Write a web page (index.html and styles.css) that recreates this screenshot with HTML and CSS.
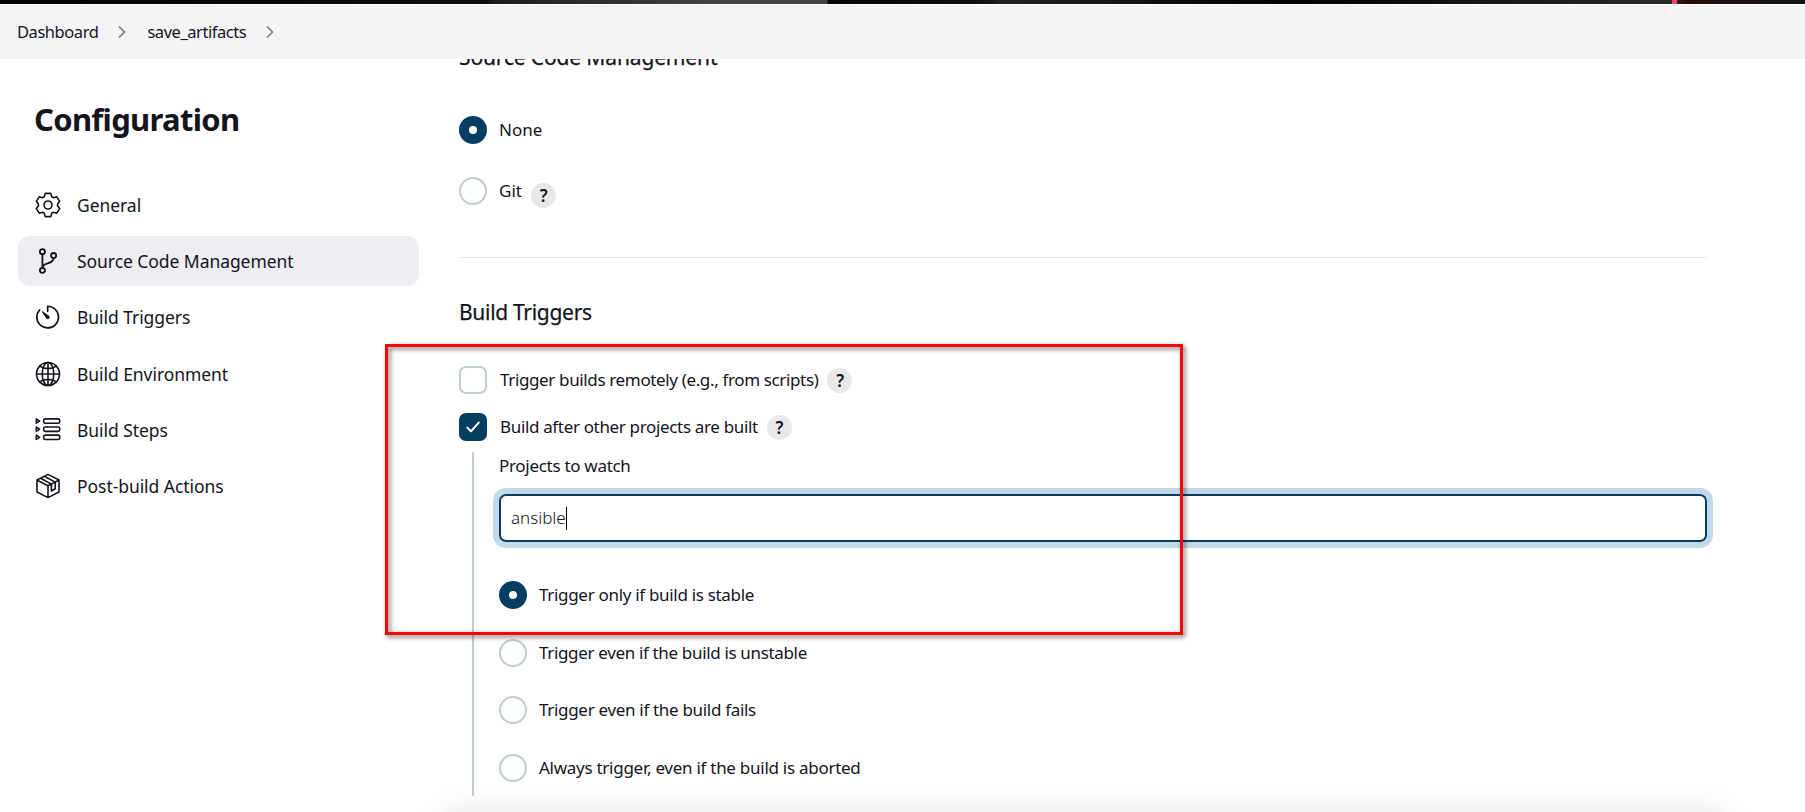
FILE: index.html
```html
<!DOCTYPE html>
<html lang="en">
<head>
<meta charset="utf-8">
<title>save_artifacts Config</title>
<link rel="stylesheet" href="styles.css">
</head>
<body>
<div class="page">
  <div class="topbar"><span class="topbar-mark"></span></div>
  <nav class="breadcrumbs">
    <a class="crumb">Dashboard</a>
    <svg class="chevron" viewBox="0 0 8 14"><path d="M1 1.5 6.5 7 1 12.5"/></svg>
    <a class="crumb">save_artifacts</a>
    <svg class="chevron" viewBox="0 0 8 14"><path d="M1 1.5 6.5 7 1 12.5"/></svg>
  </nav>
  <div class="body">
    <aside class="sidebar">
      <h1 class="title">Configuration</h1>
      <ul class="tasks">
        <li class="task"><svg class="icon" viewBox="0 0 26 26"><circle cx="13" cy="13" r="4"/><path d="M10.2 1.4h5.6l.9 3.3 1.8 1 3.3-.9 2.8 4.6-2 2.6v2l2 2.6-2.8 4.6-3.3-.9-1.8 1-.9 3.3h-5.6l-.9-3.3-1.8-1-3.3.9-2.8-4.6 2-2.6v-2l-2-2.6 2.8-4.6 3.3.9 1.8-1z"/></svg>General</li>
        <li class="task task-active"><svg class="icon icon-bold" viewBox="0 0 512 512"><circle cx="146" cy="72" r="50"/><circle cx="146" cy="440" r="50"/><path d="M146 390V122"/><circle cx="366" cy="148" r="50"/><path d="M366 198c0 142-220 68-220 192"/></svg>Source Code Management</li>
        <li class="task"><svg class="icon" viewBox="32 24 460 460"><path d="M112.91 128A191.85 191.85 0 0064 254c-1.18 106.35 85.65 193.8 192 194 106.2.2 192-85.83 192-192 0-104.54-83.55-189.61-187.5-192a4.36 4.36 0 00-4.5 4.37V152"/><path class="fill" d="M233.38 278.63l-79-113a8.13 8.13 0 0111.32-11.32l113 79a32.5 32.5 0 01-37.25 53.26 33.21 33.21 0 01-8.07-7.94z"/></svg>Build Triggers</li>
        <li class="task"><svg class="icon" viewBox="0 0 26 26"><circle cx="13" cy="13" r="11.5"/><ellipse cx="13" cy="13" rx="5.8" ry="11.5"/><path d="M13 1.5v23M1.5 13h23M4.6 5.2c4.6 3.2 12.2 3.2 16.8 0M4.6 20.8c4.6-3.2 12.2-3.2 16.8 0"/></svg>Build Environment</li>
        <li class="task"><svg class="icon" viewBox="0 0 26 26"><rect x="8.7" y="1.9" width="16" height="4.4" rx="1.6"/><rect x="8.7" y="10" width="16" height="4.4" rx="1.6"/><rect x="8.7" y="18.1" width="16" height="4.4" rx="1.6"/><path d="M1.3 2v4.2L4.6 4.1zM1.3 10.1v4.2l3.3-2.1zM1.3 18.2v4.2l3.3-2.1z"/></svg>Build Steps</li>
        <li class="task"><svg class="icon" viewBox="0 0 26 26"><path d="M13 1.4 24 7v12L13 24.6 2 19V7zM2.3 7.2 13 12.8l10.7-5.6M13 12.8v11.6M5.6 5.3l10.8 5.8M9.4 3.3l10.8 5.8v6.7l-3.8 2.2v-6.8"/></svg>Post-build Actions</li>
      </ul>
    </aside>
    <main class="main">
      <h2 class="heading heading-scm">Source Code Management</h2>
      <label class="row row-none"><span class="radio radio-on"></span><span class="label-wide">None</span></label>
      <label class="row row-git"><span class="radio"></span><span class="label-wide">Git</span><span class="help help-low">?</span></label>
      <hr class="divider">
      <h2 class="heading heading-triggers">Build Triggers</h2>
      <label class="row row-remote"><span class="check"></span><span class="label-remote">Trigger builds remotely (e.g., from scripts)</span><span class="help">?</span></label>
      <label class="row row-after"><span class="check check-on"><svg class="tick" viewBox="0 0 14 12"><path d="M1.3 6.6 5 10.3 12.7 1.6"/></svg></span><span class="label-after">Build after other projects are built</span><span class="help">?</span></label>
      <section class="nested">
        <div class="field-label">Projects to watch</div>
        <div class="input"><span>ansible</span><span class="caret"></span></div>
        <div class="options">
          <label class="row"><span class="radio radio-on"></span><span>Trigger only if build is stable</span></label>
          <label class="row"><span class="radio"></span><span class="label-unstable">Trigger even if the build is unstable</span></label>
          <label class="row"><span class="radio"></span><span>Trigger even if the build fails</span></label>
          <label class="row"><span class="radio"></span><span class="label-always">Always trigger, even if the build is aborted</span></label>
        </div>
      </section>
    </main>
  </div>
  <div class="footer-shadow"></div>
  <div class="highlight"></div>
</div>
</body>
</html>
```
FILE: styles.css
```css
* { box-sizing: border-box; }
body {
  margin: 0;
  background: #fff;
  color: #14141f;
  font: 17px/28px "Noto Sans", "Open Sans", sans-serif;
  white-space: nowrap;
}
.page {
  position: relative;
  width: 1805px;
  height: 812px;
  overflow: hidden;
  display: flex;
  flex-direction: column;
}
.topbar {
  flex: none;
  height: 5px;
  padding-left: 1672px;
  border-bottom: 1px solid #fff;
  background: linear-gradient(90deg, #000 0, #12100e 490px, #1c1c1c 495px, #444 720px, #444 827px, #050505 828px, #111 990px, #222 1000px, #000 1290px, #2a2a2a 1670px, #2a0808 1685px, #1a1210 1720px, #111 1805px);
}
.topbar-mark { display: block; width: 5px; height: 4px; background: #f0465f; }
.breadcrumbs {
  position: relative;
  z-index: 1;
  flex: none;
  height: 54px;
  padding-left: 17px;
  display: flex;
  align-items: center;
  background: #f4f4f7;
  font-size: 16.5px;
  letter-spacing: -0.45px;
}
.chevron {
  width: 8px;
  height: 14px;
  margin: 0 21px 0 20px;
  fill: none;
  stroke: #7c7c84;
  stroke-width: 1.7;
}
.body { flex: 1; min-height: 0; display: flex; }
.sidebar { width: 459px; flex: none; padding: 39px 40px 0 18px; }
.title {
  margin: 0 0 40px;
  padding-left: 16px;
  font-size: 31px;
  line-height: 42px;
  font-weight: 700;
  letter-spacing: -0.7px;
}
.tasks {
  margin: 0;
  padding: 0;
  list-style: none;
  display: flex;
  flex-direction: column;
  gap: 6.2px;
}
.task {
  height: 50px;
  padding-left: 17px;
  display: flex;
  align-items: center;
  gap: 16px;
  border-radius: 12px;
  font-size: 17.5px;
  letter-spacing: -0.06px;
}
.task-active { background: #eeedf2; }
.icon {
  width: 26px;
  height: 26px;
  fill: none;
  stroke: #14141f;
  stroke-width: 1.6;
  stroke-linecap: round;
  stroke-linejoin: round;
}
.icon[viewBox^="32"] { stroke-width: 30; }
.icon-bold { stroke-width: 36; }
.icon .fill { fill: #14141f; stroke: none; }
.main { width: 1248px; flex: none; }
.heading {
  margin: 0;
  font-size: 21px;
  line-height: 30px;
  font-weight: 400;
  letter-spacing: -0.14px;
  -webkit-text-stroke: 0.25px #14141f;
}
.heading-scm { margin-top: -17px; }
.heading-triggers { margin-top: 39px; letter-spacing: -0.3px; }
.row { display: flex; align-items: center; height: 28px; letter-spacing: -0.31px; }
.row-none { margin-top: 44px; }
.row-git { margin-top: 33px; }
.radio, .check {
  width: 28px;
  height: 28px;
  flex: none;
  margin-right: 12px;
  border: 2px solid #c3ccd1;
  border-radius: 50%;
  background: #fff;
}
.radio-on { border: 10px solid #063e61; }
.check { margin-right: 13px; border-radius: 7px; }
.check-on {
  border: 0;
  background: #063e61;
  display: flex;
  align-items: center;
  justify-content: center;
}
.tick {
  width: 14px;
  height: 12px;
  fill: none;
  stroke: #fff;
  stroke-width: 2;
  stroke-linecap: round;
  stroke-linejoin: round;
}
.label-wide { letter-spacing: 0; }
.label-remote { letter-spacing: -0.36px; }
.label-after { letter-spacing: -0.34px; }
.label-unstable { letter-spacing: -0.34px; }
.label-always { letter-spacing: -0.27px; }
.help {
  width: 25px;
  height: 25px;
  margin-left: 9px;
  border-radius: 50%;
  background: #e8e8e8;
  font-size: 17px;
  line-height: 25px;
  font-weight: 600;
  text-align: center;
}
.help-low { margin-top: 9px; }
.divider { margin: 52px 0 0; border: 0; height: 1px; background: #e9e9ee; }
.row-remote { margin-top: 39px; }
.row-after { margin-top: 19px; }
.nested {
  height: 344px;
  margin: 11px 0 0 13px;
  padding-left: 25px;
  border-left: 2px solid #c3ccd1;
}
.field-label { line-height: 28px; letter-spacing: -0.3px; }
.input {
  height: 48px;
  margin-top: 14px;
  padding-left: 10px;
  display: flex;
  align-items: center;
  border: 2px solid #063e61;
  border-radius: 7px;
  box-shadow: 0 0 0 6px #c2d9e7;
  font-weight: 300;
}
.caret { width: 1px; height: 23px; background: #000; }
.options { margin-top: 39px; display: flex; flex-direction: column; gap: 29.5px; }
.footer-shadow {
  position: absolute;
  left: 443px;
  top: 812px;
  width: 1282px;
  height: 40px;
  box-shadow: 0 0 30px rgba(0, 0, 0, 0.1);
}
.highlight {
  position: absolute;
  left: 385px;
  top: 344px;
  width: 798px;
  height: 291px;
  border: 3px solid #f00;
  filter: drop-shadow(2px 2px 2.5px rgba(0, 0, 0, 0.6));
}
```
